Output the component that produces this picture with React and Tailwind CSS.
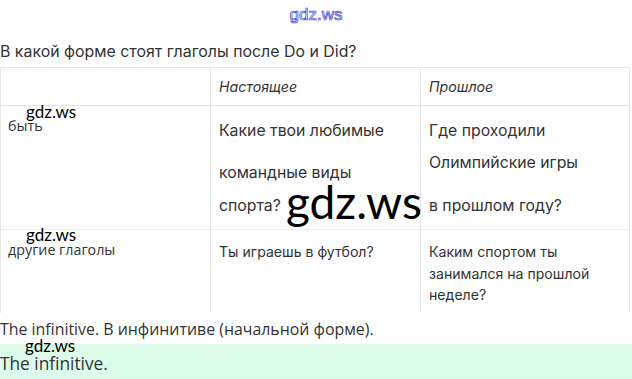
import React from 'react';

const Mark = ({ className }) => (
  <span className={"absolute font-['Lato',sans-serif] text-black leading-none " + className}>gdz.ws</span>
);

const App = () => {
  return (
    <div className="w-[632px] h-[379px] overflow-hidden bg-white text-[#333] font-['Inter',sans-serif] relative">
      <div className="h-[42px] flex justify-center pt-[2px]">
        <span className="text-[17px] text-transparent [-webkit-text-stroke:0.7px_#3b3bd6] font-['Liberation_Sans',sans-serif]">gdz.ws</span>
      </div>
      <p className="text-[15.9px] leading-[20px] mb-[5px]">В какой форме стоят глаголы после Do и Did?</p>

      <div className="w-[630px] border-t border-l border-r border-[#e8e8e8]">
        <div className="grid grid-cols-[210px_210px_1fr] h-[38px] border-b border-[#e4e4e4]">
          <div className="border-r border-[#e8e8e8]"></div>
          <div className="border-r border-[#e8e8e8] italic pl-[8px] pt-[10px] text-[14.2px] leading-[18px]">Настоящее</div>
          <div className="italic pl-[8px] pt-[10px] text-[14.2px] leading-[18px]">Прошлое</div>
        </div>
        <div className="grid grid-cols-[210px_210px_1fr] h-[124px] border-b border-[#eeeeee] relative">
          <div className="border-r border-[#e8e8e8] relative">
            <Mark className="left-[25px] top-[-3px] text-[17px]" />
            <div className="pl-[7px] pt-[12px] text-[14.3px] leading-[16px] font-['Open_Sans',sans-serif]">быть</div>
          </div>
          <div className="border-r border-[#e8e8e8] pl-[8px] text-[15.8px]">
            <div className="mt-[15px] leading-[20px]">Какие твои любимые</div>
            <div className="mt-[22px] leading-[20px]">командные виды</div>
            <div className="mt-[13px] leading-[20px]">спорта?</div>
          </div>
          <div className="pl-[8px] text-[15.8px]">
            <div className="mt-[15px] leading-[20px]">Где проходили</div>
            <div className="mt-[12px] leading-[20px]">Олимпийские игры</div>
            <div className="mt-[23px] leading-[20px]">в прошлом году?</div>
          </div>
          <Mark className="left-[285px] top-[73px] text-[46px]" />
        </div>
        <div className="grid grid-cols-[210px_210px_1fr] h-[83px]">
          <div className="border-r border-[#e8e8e8] relative">
            <Mark className="left-[25px] top-[-4px] text-[17px]" />
            <div className="pl-[7px] pt-[12px] text-[14.3px] leading-[16px] font-['Open_Sans',sans-serif]">другие глаголы</div>
          </div>
          <div className="border-r border-[#e8e8e8] pl-[8px] pt-[11px] text-[14.1px] leading-[21px]">Ты играешь в футбол?</div>
          <div className="pl-[8px] pt-[11px] text-[14.1px] leading-[21.5px]">
            <div>Каким спортом ты</div>
            <div>занимался на прошлой</div>
            <div>неделе?</div>
          </div>
        </div>
      </div>

      <p className="text-[15.9px] leading-[20px] mt-[6px] font-['Open_Sans',sans-serif]">The infinitive. В инфинитиве (начальной форме).</p>
      <div className="bg-[#dcfbea] h-[40px] mt-[5px] relative">
        <Mark className="left-[25px] top-[-7px] text-[17px]" />
        <p className="pt-[10px] text-[17.3px] leading-[20px] font-['Open_Sans',sans-serif]">The infinitive.</p>
      </div>
    </div>
  );
};

export default App;
